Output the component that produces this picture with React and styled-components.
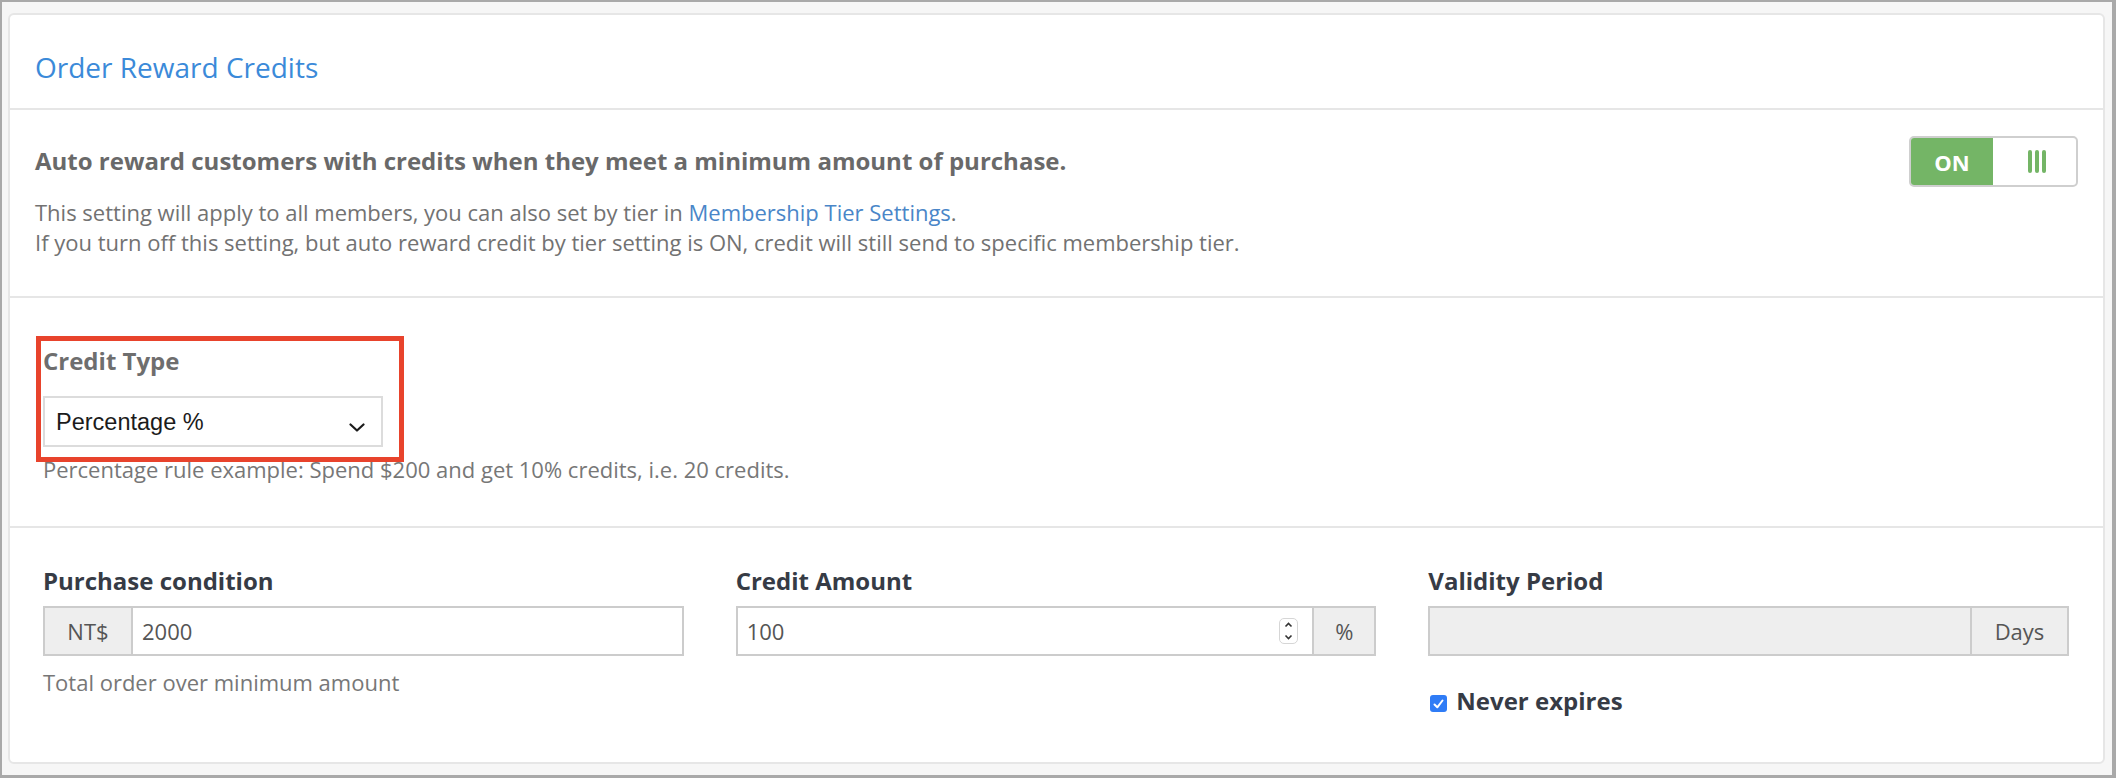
import styled, { createGlobalStyle } from "styled-components";

const GlobalStyle = createGlobalStyle`
    html, body {
        margin: 0;
        padding: 0;
    }
    body {
        background: #f6f6f6;
        font-family: "Open Sans", "Liberation Sans", sans-serif;
    }
    * {
        box-sizing: border-box;
    }
`;

const LINE = "#e6e6e6";
const FIELD_BORDER = "#cccccc";
const GREEN = "#74b566";

const Frame = styled.div`
    width: 2116px;
    height: 778px;
    border-style: solid;
    border-color: #a9a9a9;
    border-width: 2px 4px 3px 2px;
    padding: 11px 7px 11px 6px;
    background: #f6f6f6;
`;

const Card = styled.div`
    display: flex;
    flex-direction: column;
    height: 100%;
    background: #fff;
    border: 2px solid ${LINE};
    border-radius: 6px;
`;

const Header = styled.div`
    padding: 35px 25px 24px;
    border-bottom: 2px solid ${LINE};
`;

const Title = styled.h2`
    margin: 0;
    font-size: 28px;
    line-height: 34px;
    font-weight: 400;
    color: #3b8ad9;
`;

const Section = styled.div`
    padding: ${({ $pad }) => $pad};
    border-bottom: ${({ $last }) => ($last ? "none" : `2px solid ${LINE}`)};
    flex: ${({ $last }) => ($last ? 1 : "none")};
`;

const SettingRow = styled.div`
    display: flex;
    justify-content: space-between;
    align-items: flex-start;
`;

const SettingText = styled.div`
    padding-top: 10px;
`;

const Lead = styled.div`
    font-size: 24px;
    line-height: 30px;
    font-weight: 700;
    color: #696969;
`;

const Note = styled.div`
    margin-top: 21px;
    font-size: 22px;
    line-height: 30px;
    color: #727272;

    a {
        color: #4a86c8;
        text-decoration: none;
    }
`;

const Toggle = styled.div`
    display: flex;
    width: 169px;
    height: 51px;
    border: 2px solid #cfcfcf;
    border-radius: 5px;
    overflow: hidden;
`;

const ToggleOn = styled.div`
    width: 82px;
    display: flex;
    align-items: center;
    justify-content: center;
    background: ${GREEN};
    color: #fff;
    font-size: 22px;
    font-weight: 700;
`;

const ToggleKnob = styled.div`
    flex: 1;
    display: flex;
    align-items: center;
    justify-content: center;
    gap: 3px;
    padding-left: 4px;
`;

const KnobBar = styled.span`
    width: 4px;
    height: 23px;
    border-radius: 2px;
    background: ${GREEN};
`;

const Highlight = styled.div`
    display: inline-block;
    margin-left: -7px;
    padding: 5px 16px 10px 2px;
    border: 5px solid #e8432c;
    vertical-align: top;
`;

const Label = styled.div`
    font-size: 24px;
    line-height: 30px;
    font-weight: 700;
    color: ${({ $muted }) => ($muted ? "#6e6e6e" : "#363b45")};
`;

const Select = styled.div`
    margin-top: 20px;
    width: 340px;
    height: 51px;
    display: flex;
    align-items: center;
    justify-content: space-between;
    padding: 2px 16px 0 11px;
    border: 2px solid #dcdcdc;
    background: #fff;
    font-family: "Liberation Sans", Arial, sans-serif;
    font-size: 23.5px;
    color: #1b1b1b;

    svg {
        margin-top: 10px;
    }
`;

const Help = styled.div`
    margin-top: ${({ $gap }) => $gap};
    font-size: 22px;
    line-height: 30px;
    color: #777;
`;

const Columns = styled.div`
    display: grid;
    grid-template-columns: repeat(3, 1fr);
    column-gap: 52px;
`;

const InputGroup = styled.div`
    margin-top: 10px;
    display: flex;
    height: 50px;
    border: 2px solid ${FIELD_BORDER};
`;

const Addon = styled.div`
    width: ${({ $w }) => $w};
    display: flex;
    align-items: center;
    justify-content: center;
    background: #eee;
    color: #555;
    font-size: 22px;
    border-left: ${({ $side }) => ($side === "right" ? `2px solid ${FIELD_BORDER}` : "none")};
    border-right: ${({ $side }) => ($side === "left" ? `2px solid ${FIELD_BORDER}` : "none")};
`;

const Field = styled.div`
    flex: 1;
    display: flex;
    align-items: center;
    background: ${({ $disabled }) => ($disabled ? "#eee" : "#fff")};
`;

const FieldInput = styled.input`
    flex: 1;
    min-width: 0;
    height: 100%;
    border: 0;
    outline: none;
    padding: 0 9px;
    background: transparent;
    font-family: "Open Sans", sans-serif;
    font-size: 22px;
    color: #555;
`;

const Spinner = styled.div`
    width: 19px;
    height: 26px;
    margin-right: 14px;
    border: 1px solid #d6d6d6;
    border-radius: 5px;
    display: flex;
    flex-direction: column;
    align-items: center;
    justify-content: space-around;
    background: #fff;
`;

const CheckRow = styled.label`
    margin-top: 30px;
    display: flex;
    align-items: center;
    gap: 9px;
`;

const CheckBox = styled.span`
    width: 17px;
    height: 17px;
    margin: 5px 0 0 2px;
    border-radius: 3px;
    background: #2f7cf6;
    display: flex;
    align-items: center;
    justify-content: center;
`;

function Chevron() {
    return (
        <svg width="16" height="9" viewBox="0 0 16 9">
            <path d="M1.5 1.5 L8 7.5 L14.5 1.5" fill="none" stroke="#1b1b1b" strokeWidth="2.2" strokeLinecap="round" strokeLinejoin="round" />
        </svg>
    );
}

function Spin() {
    return (
        <Spinner>
            <svg width="9" height="6" viewBox="0 0 9 6">
                <path d="M1.5 4.5 L4.5 1.5 L7.5 4.5" fill="none" stroke="#333" strokeWidth="1.6" />
            </svg>
            <svg width="9" height="6" viewBox="0 0 9 6">
                <path d="M1.5 1.5 L4.5 4.5 L7.5 1.5" fill="none" stroke="#333" strokeWidth="1.6" />
            </svg>
        </Spinner>
    );
}

export default function App() {
    return (
        <>
            <GlobalStyle />
            <Frame>
                <Card>
                    <Header>
                        <Title>Order Reward Credits</Title>
                    </Header>

                    <Section $pad="26px 25px 39px">
                        <SettingRow>
                            <SettingText>
                                <Lead>Auto reward customers with credits when they meet a minimum amount of purchase.</Lead>
                                <Note>
                                    This setting will apply to all members, you can also set by tier in{" "}
                                    <a href="#tiers">Membership Tier Settings</a>.
                                    <br />
                                    If you turn off this setting, but auto reward credit by tier setting is ON, credit will still send to specific membership tier.
                                </Note>
                            </SettingText>
                            <Toggle>
                                <ToggleOn>ON</ToggleOn>
                                <ToggleKnob>
                                    <KnobBar />
                                    <KnobBar />
                                    <KnobBar />
                                </ToggleKnob>
                            </Toggle>
                        </SettingRow>
                    </Section>

                    <Section $pad="38px 34px 42px 33px">
                        <Highlight>
                            <Label $muted>Credit Type</Label>
                            <Select>
                                <span>Percentage %</span>
                                <Chevron />
                            </Select>
                        </Highlight>
                        <Help $gap="-8px">Percentage rule example: Spend $200 and get 10% credits, i.e. 20 credits.</Help>
                    </Section>

                    <Section $last $pad="38px 34px 0 33px">
                        <Columns>
                            <div>
                                <Label>Purchase condition</Label>
                                <InputGroup>
                                    <Addon $side="left" $w="88px">NT$</Addon>
                                    <Field>
                                        <FieldInput defaultValue="2000" />
                                    </Field>
                                </InputGroup>
                                <Help $gap="11px">Total order over minimum amount</Help>
                            </div>
                            <div>
                                <Label>Credit Amount</Label>
                                <InputGroup>
                                    <Field>
                                        <FieldInput defaultValue="100" />
                                        <Spin />
                                    </Field>
                                    <Addon $side="right" $w="62px">%</Addon>
                                </InputGroup>
                            </div>
                            <div>
                                <Label>Validity Period</Label>
                                <InputGroup>
                                    <Field $disabled>
                                        <FieldInput disabled defaultValue="" />
                                    </Field>
                                    <Addon $side="right" $w="97px">Days</Addon>
                                </InputGroup>
                                <CheckRow>
                                    <CheckBox>
                                        <svg width="11" height="10" viewBox="0 0 11 10">
                                            <path d="M1.5 5.5 L4.3 8.3 L9.5 1.5" fill="none" stroke="#fff" strokeWidth="2" strokeLinecap="round" strokeLinejoin="round" />
                                        </svg>
                                    </CheckBox>
                                    <Label>Never expires</Label>
                                </CheckRow>
                            </div>
                        </Columns>
                    </Section>
                </Card>
            </Frame>
        </>
    );
}
